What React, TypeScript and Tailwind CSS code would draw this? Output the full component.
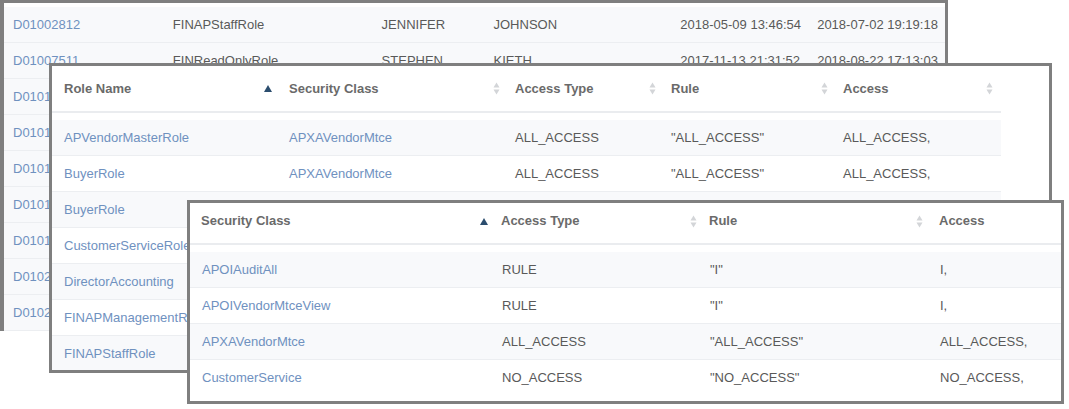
import type { ReactNode } from 'react'

const font = { fontFamily: '"Liberation Sans", Arial, sans-serif' }

type Col = { label: string; width: string; sort?: 'asc' | 'none' | null }

function SortIcon({ kind }: { kind: 'asc' | 'none' }) {
  if (kind === 'asc') {
    return (
      <svg width="8" height="7" viewBox="0 0 8 7" className="shrink-0">
        <path d="M4 0 L8 7 L0 7 Z" fill="#2b4d6e" />
      </svg>
    )
  }
  return (
    <svg width="7" height="13" viewBox="0 0 7 13" className="shrink-0">
      <path d="M3.5 0.5 L6.5 5.5 L0.5 5.5 Z" fill="#d3d5d8" />
      <path d="M3.5 12.5 L6.5 7.5 L0.5 7.5 Z" fill="#d3d5d8" />
    </svg>
  )
}

function HeaderCell({ col, className }: { col: Col; className: string }) {
  return (
    <div className={`flex items-center justify-between pl-3 ${col.width} ${className}`}>
      <span className="text-[13px] font-bold text-[#6a6a6a]">{col.label}</span>
      {col.sort && <SortIcon kind={col.sort} />}
    </div>
  )
}

function Cell({ children, width, link }: { children: ReactNode; width: string; link?: boolean }) {
  return (
    <div
      className={`pl-3 whitespace-nowrap overflow-hidden text-[13px] ${width} ${
        link ? 'text-[#6f91bf]' : 'text-[#595959]'
      }`}
    >
      {children}
    </div>
  )
}

const usersCols = ['w-[160px]', 'w-[209px]', 'w-[112px]', 'w-[187px]', 'w-[137px]', 'w-[137px]']
const users = [
  ['D01002812', 'FINAPStaffRole', 'JENNIFER', 'JOHNSON', '2018-05-09 13:46:54', '2018-07-02 19:19:18'],
  ['D01007511', 'FINReadOnlyRole', 'STEPHEN', 'KIETH', '2017-11-13 21:31:52', '2018-08-22 17:13:03'],
  ['D01012044', 'APVendorMasterRole', 'MARIA', 'LOPEZ', '2017-10-02 09:12:40', '2018-08-20 11:02:19'],
  ['D01013377', 'BuyerRole', 'DAVID', 'MILLER', '2017-09-14 15:21:07', '2018-08-17 08:44:51'],
  ['D01015901', 'BuyerRole', 'LINDA', 'NGUYEN', '2017-08-30 10:05:33', '2018-08-15 16:30:12'],
  ['D01017263', 'CustomerServiceRole', 'ROBERT', 'CLARK', '2017-07-21 13:48:26', '2018-08-10 12:19:45'],
  ['D01019820', 'DirectorAccounting', 'SUSAN', 'WALKER', '2017-06-05 08:57:14', '2018-08-08 09:41:38'],
  ['D01021456', 'FINAPManagementRole', 'JAMES', 'HALL', '2017-05-18 17:36:09', '2018-08-03 14:25:57'],
  ['D01023318', 'FINAPStaffRole', 'KAREN', 'YOUNG', '2017-04-26 11:14:48', '2018-07-30 10:08:21'],
]

const roleCols: Col[] = [
  { label: 'Role Name', width: 'w-[225px] pr-[5px]', sort: 'asc' },
  { label: 'Security Class', width: 'w-[226px] pr-[3px]', sort: 'none' },
  { label: 'Access Type', width: 'w-[156px] pr-[3px]', sort: 'none' },
  { label: 'Rule', width: 'w-[172px] pr-[3px]', sort: 'none' },
  { label: 'Access', width: 'w-[170px] pr-[8px]', sort: 'none' },
]
const roles = [
  ['APVendorMasterRole', 'APXAVendorMtce', 'ALL_ACCESS', '"ALL_ACCESS"', 'ALL_ACCESS,'],
  ['BuyerRole', 'APXAVendorMtce', 'ALL_ACCESS', '"ALL_ACCESS"', 'ALL_ACCESS,'],
  ['BuyerRole', 'APOIAuditAll', 'RULE', '"I"', 'I,'],
  ['CustomerServiceRole', 'APOIVendorMtceView', 'RULE', '"I"', 'I,'],
  ['DirectorAccounting', 'APXAVendorMtce', 'ALL_ACCESS', '"ALL_ACCESS"', 'ALL_ACCESS,'],
  ['FINAPManagementRole', 'CustomerService', 'NO_ACCESS', '"NO_ACCESS"', 'NO_ACCESS,'],
  ['FINAPStaffRole', 'APXAVendorMtce', 'ALL_ACCESS', '"ALL_ACCESS"', 'ALL_ACCESS,'],
]

const classCols: Col[] = [
  { label: 'Security Class', width: 'w-[300px] pr-[2px]', sort: 'asc' },
  { label: 'Access Type', width: 'w-[208px] pr-[1px]', sort: 'none' },
  { label: 'Rule', width: 'w-[230px] pr-[5px]', sort: 'none' },
  { label: 'Access', width: 'w-[133px]', sort: null },
]
const classes = [
  ['APOIAuditAll', 'RULE', '"I"', 'I,'],
  ['APOIVendorMtceView', 'RULE', '"I"', 'I,'],
  ['APXAVendorMtce', 'ALL_ACCESS', '"ALL_ACCESS"', 'ALL_ACCESS,'],
  ['CustomerService', 'NO_ACCESS', '"NO_ACCESS"', 'NO_ACCESS,'],
]

const roleWidths = ['w-[225px]', 'w-[226px]', 'w-[156px]', 'w-[172px]', 'w-[170px]']
const classWidths = ['w-[300px]', 'w-[208px]', 'w-[230px]', 'w-[133px]']

export default function App() {
  return (
    <div className="relative w-[1069px] h-[409px] bg-white overflow-hidden" style={font}>
      {/* users table, partly covered */}
      <div className="absolute left-0 top-0 w-[948px] h-[331px] border-[3px] border-l-4 border-[#7f7f7f] bg-white pt-[4px]">
        {users.map((u, i) => (
          <div key={i} className="flex items-center h-[36px] bg-[#f8f9fb] border-b border-[#eceef1]">
            {u.map((v, j) => (
              <div
                key={j}
                className={`pl-[9px] whitespace-nowrap text-[13px] ${usersCols[j]} ${
                  j === 0 ? 'text-[#6f91bf]' : 'text-[#595959]'
                }`}
              >
                {v}
              </div>
            ))}
          </div>
        ))}
      </div>

      {/* role table */}
      <div className="absolute left-[49px] top-[63px] w-[1003px] h-[310px] border-[3px] border-[#7f7f7f] bg-white overflow-hidden">
        <div className="w-[949px]">
          <div className="flex h-[47px] border-b-2 border-[#eaecef]">
            {roleCols.map((c) => (
              <HeaderCell key={c.label} col={c} className="" />
            ))}
          </div>
          <div className="pt-[7px]">
            {roles.map((r, i) => (
              <div
                key={i}
                className={`flex items-center h-[36px] border-b border-[#eceef1] ${
                  i % 2 === 0 ? 'bg-[#f8f9fb]' : 'bg-white'
                }`}
              >
                {r.map((v, j) => (
                  <Cell key={j} width={roleWidths[j]} link={j < 2}>
                    {v}
                  </Cell>
                ))}
              </div>
            ))}
          </div>
        </div>
      </div>

      {/* security class table */}
      <div className="absolute left-[187px] top-[200px] w-[877px] h-[204px] border-[3px] border-[#7f7f7f] bg-white overflow-hidden">
        <div className="flex h-[42px] pb-[4px] border-b-2 border-[#eaecef]">
          {classCols.map((c) => (
            <HeaderCell key={c.label} col={c} className="pl-[11px]" />
          ))}
        </div>
        <div className="pt-[7px]">
          {classes.map((r, i) => (
            <div
              key={i}
              className={`flex items-center h-[36px] border-b border-[#eceef1] ${
                i % 2 === 0 ? 'bg-[#f8f9fb]' : 'bg-white'
              } ${i === classes.length - 1 ? 'border-b-0' : ''}`}
            >
              {r.map((v, j) => (
                <Cell key={j} width={classWidths[j]} link={j === 0}>
                  {v}
                </Cell>
              ))}
            </div>
          ))}
        </div>
      </div>
    </div>
  )
}
